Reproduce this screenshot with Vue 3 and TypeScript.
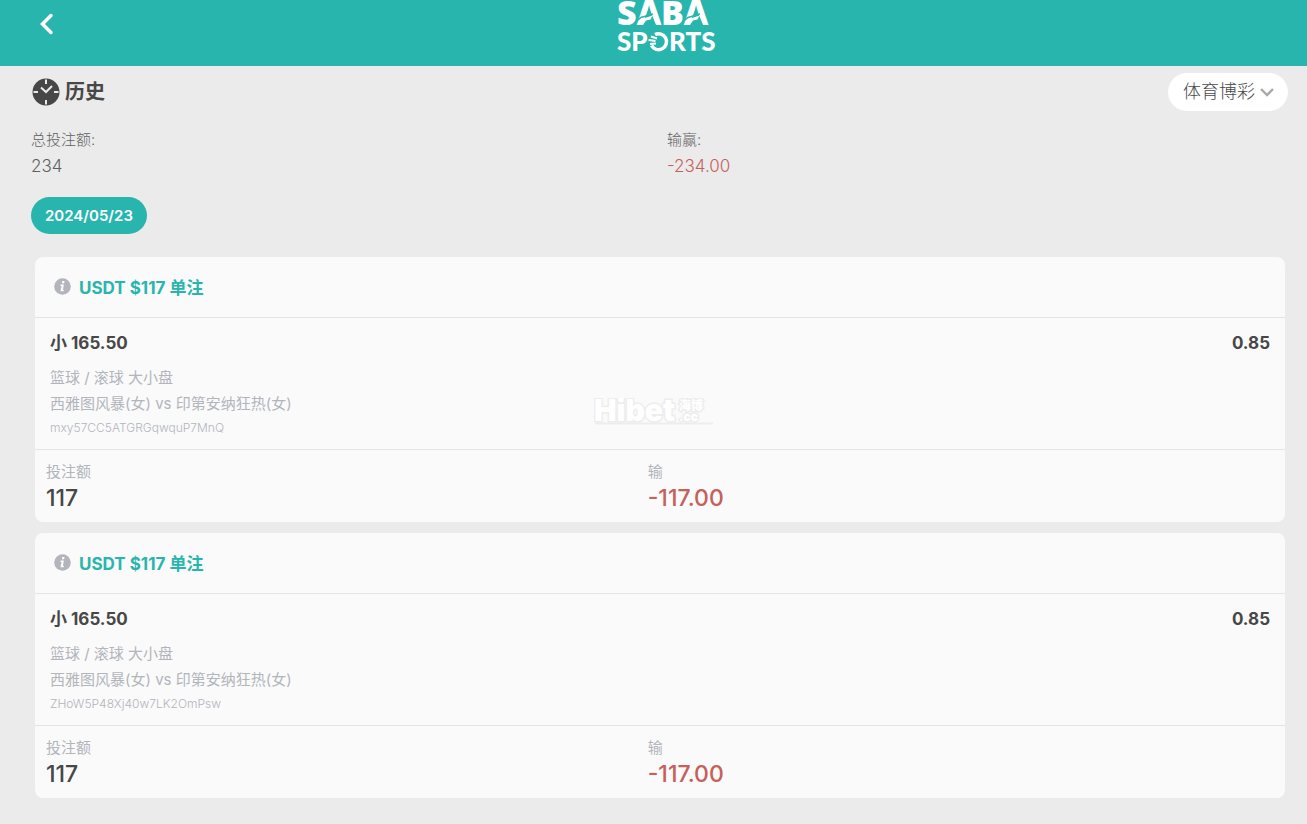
<script setup lang="ts">
import { ref } from 'vue'

interface Bet {
  id: string
  title: string
  pick: string
  line: string
  odds: string
  market: string
  match: string
  stake: string
  result: string
}

const category = ref('体育博彩')

const bets: Bet[] = [
  {
    id: 'mxy57CC5ATGRGqwquP7MnQ',
    title: 'USDT $117 单注',
    pick: '小',
    line: '165.50',
    odds: '0.85',
    market: '篮球 / 滚球 大小盘',
    match: '西雅图风暴(女) vs 印第安纳狂热(女)',
    stake: '117',
    result: '-117.00',
  },
  {
    id: 'ZHoW5P48Xj40w7LK2OmPsw',
    title: 'USDT $117 单注',
    pick: '小',
    line: '165.50',
    odds: '0.85',
    market: '篮球 / 滚球 大小盘',
    match: '西雅图风暴(女) vs 印第安纳狂热(女)',
    stake: '117',
    result: '-117.00',
  },
]
</script>

<template>
  <div class="page">
    <header class="topbar">
      <button class="back" type="button" aria-label="返回">
        <svg width="16" height="24" viewBox="0 0 16 24" fill="none">
          <path d="M13 3.500 4.500 12l8.500 8.500" stroke="#fff" stroke-width="3.500" stroke-linecap="round" />
        </svg>
      </button>
      <svg class="logo" width="100" height="54" viewBox="0 0 100 54" role="img" aria-label="SABA SPORTS">
        <g class="logo-text logo-big">
          <text x="3" y="25">S</text>
          <text x="22" y="25" class="logo-wide">A</text>
          <text x="47" y="25">B</text>
          <text x="69" y="25" class="logo-wide">A</text>
        </g>
        <path d="m35 8 7.500 18H27.500zM82 8l7.500 18H74.500z" fill="#28b5ae" />
        <path d="m23 25 5-6 10.500-3.500-2 4-4.500 1-3 4.500zM70 25l5-6 10.500-3.500-2 4-4.500 1-3 4.500z" fill="#fff" />
        <path d="m22 21.500 5-4 12-3.500M69 21.500l5-4L86 14" fill="none" stroke="#28b5ae" stroke-width="1.500" />
        <g class="logo-text logo-small">
          <text x="3" y="51">SP</text>
          <text x="55" y="51">RTS</text>
        </g>
        <g fill="none" stroke="#fff">
          <path d="M41 34.500a8 8 0 1 1-3.500 11" stroke-width="3.500" />
          <path d="m37 36.500 6 2M34.500 40l7 1M36 44l6-.5" stroke-width="2" />
        </g>
      </svg>
    </header>

    <main>
      <div class="heading">
        <h1>
          <svg width="28" height="28" viewBox="0 0 28 28" fill="none">
            <circle cx="14" cy="14" r="13.500" fill="#474747" />
            <path d="M14 1.500v4.500M14 22v4.500M1.500 14H6M22 14h4.500" stroke="#ebebeb" stroke-width="2" />
            <path d="m9 9.500 5 4.500 6-6" stroke="#ebebeb" stroke-width="2" />
          </svg>
          <span>历史</span>
        </h1>
        <div class="picker">
          <select v-model="category" aria-label="类别">
            <option>体育博彩</option>
          </select>
          <svg width="14" height="10" viewBox="0 0 14 10" fill="none">
            <path d="m1 2 6 6 6-6" stroke="#a9a9a9" stroke-width="2.400" />
          </svg>
        </div>
      </div>

      <dl class="totals">
        <div>
          <dt>总投注额:</dt>
          <dd>234</dd>
        </div>
        <div>
          <dt>输赢:</dt>
          <dd class="loss">-234.00</dd>
        </div>
      </dl>

      <button class="date" type="button">2024/05/23</button>

      <section class="bets">
        <article v-for="bet in bets" :key="bet.id" class="card">
          <h2>
            <svg width="17" height="17" viewBox="0 0 17 17">
              <circle cx="8.500" cy="8.500" r="8.300" fill="#b2b5bc" />
              <path d="M8.300 3h2.200l-.4 2.200H7.900zM6.700 6.400h3.200l-1.100 5.400h1.100l-.3 1.500H6.500l1.100-5.400H6.400z" fill="#fff" />
            </svg>
            <span>{{ bet.title }}</span>
          </h2>
          <div class="detail">
            <div class="pick">
              <strong>{{ bet.pick }} {{ bet.line }}</strong>
              <strong>{{ bet.odds }}</strong>
            </div>
            <p>{{ bet.market }}</p>
            <p>{{ bet.match }}</p>
            <small>{{ bet.id }}</small>
          </div>
          <dl class="amounts">
            <div>
              <dt>投注额</dt>
              <dd>{{ bet.stake }}</dd>
            </div>
            <div>
              <dt>输</dt>
              <dd class="loss">{{ bet.result }}</dd>
            </div>
          </dl>
        </article>
      </section>
    </main>

    <svg class="watermark" width="120" height="28" viewBox="0 0 120 28" aria-hidden="true">
      <text x="0" y="23" class="mark-name">Hibet</text>
      <text x="85" y="12" class="mark-side">海博</text>
      <text x="85" y="23" class="mark-side">.cc</text>
      <path d="M1 25.500h118" stroke="#ededed" stroke-width="2" />
    </svg>
  </div>
</template>

<style>
body {
  background: #ebebeb;
}
</style>

<style scoped>
.page {
  position: relative;
  min-height: 100vh;
  color: #474747;
  font-family: Inter, "Noto Sans CJK SC", sans-serif;
}

.topbar {
  display: grid;
  grid-template-columns: 1fr auto 1fr;
  align-items: start;
  height: 66px;
  background: #28b5ae;
}

.back {
  justify-self: start;
  margin: 12px 0 0 38px;
  padding: 0;
  border: 0;
  background: none;
}

.back svg,
.logo {
  display: block;
}

.logo {
  margin-left: 20px;
  overflow: visible;
}

.logo-text {
  fill: #fff;
  font-family: Lato, sans-serif;
  font-weight: 900;
}

.logo-big {
  font-family: "Noto Sans", sans-serif;
  font-size: 34px;
}

.logo-wide {
  font-family: Inter, sans-serif;
  font-weight: 800;
}

.logo-small {
  font-size: 26px;
}

.heading {
  display: flex;
  justify-content: space-between;
  padding: 7px 19px 0 32px;
}

h1,
h2,
p,
dl,
dd {
  margin: 0;
}

h1 {
  display: flex;
  align-items: center;
  gap: 5px;
  height: 38px;
  font-size: 20px;
  line-height: 28px;
}

.picker {
  position: relative;
}

.picker select {
  width: 120px;
  height: 38px;
  padding: 0 15px;
  border: 0;
  border-radius: 19px;
  background: #fff;
  color: #474747;
  font: 300 18px/38px Inter, "Noto Sans CJK SC", sans-serif;
  appearance: none;
}

.picker svg {
  position: absolute;
  top: 14px;
  right: 14px;
  pointer-events: none;
}

.totals {
  display: grid;
  grid-template-columns: 1fr 1fr;
  padding: 16px 4px 0 31px;
  color: #606060;
  font-weight: 300;
}

.totals dt {
  font-size: 15px;
  line-height: 26px;
}

.totals dd {
  font-size: 17px;
  line-height: 26px;
}

.date {
  display: block;
  height: 37px;
  margin: 18px 0 0 31px;
  padding: 0 14px;
  border: 0;
  border-radius: 19px;
  background: #28b5ae;
  color: #fff;
  font: 600 15px/37px Inter, sans-serif;
}

.bets {
  display: flex;
  flex-direction: column;
  gap: 11px;
  padding: 23px 22px 25px 35px;
}

.card {
  border-radius: 8px;
  background: #fafafa;
}

h2 {
  display: flex;
  align-items: center;
  gap: 8px;
  box-sizing: border-box;
  height: 60px;
  padding: 0 19px 2px;
  color: #28b5ae;
  font-size: 17px;
}

.detail {
  padding: 12px 15px 10px;
  border: solid #e4e4e4;
  border-width: 1px 0;
  color: #b2b5bc;
}

.pick {
  display: flex;
  justify-content: space-between;
  margin-bottom: 9px;
  color: #474747;
  font-size: 17px;
  line-height: 26px;
}

.detail p {
  font-size: 15px;
  line-height: 26px;
}

.detail small {
  display: block;
  font-size: 12px;
  font-weight: 300;
  line-height: 22px;
}

.amounts {
  display: grid;
  grid-template-columns: 49fr 51fr;
  padding: 9px 11px 10px;
}

.amounts dt {
  color: #b2b5bc;
  font-size: 15px;
  line-height: 26px;
}

.amounts dd {
  font-size: 23px;
  font-weight: 500;
  line-height: 27px;
}

dd.loss {
  color: #c5605a;
}

.watermark {
  position: absolute;
  top: 50%;
  left: 50%;
  transform: translate(-50%, -50%);
  pointer-events: none;
}

.watermark text {
  fill: #fff;
  stroke: #ededed;
  stroke-width: 3px;
  paint-order: stroke;
  font-weight: 900;
}

.mark-name {
  font-size: 30px;
}

.mark-side {
  font-size: 12px;
}
</style>
